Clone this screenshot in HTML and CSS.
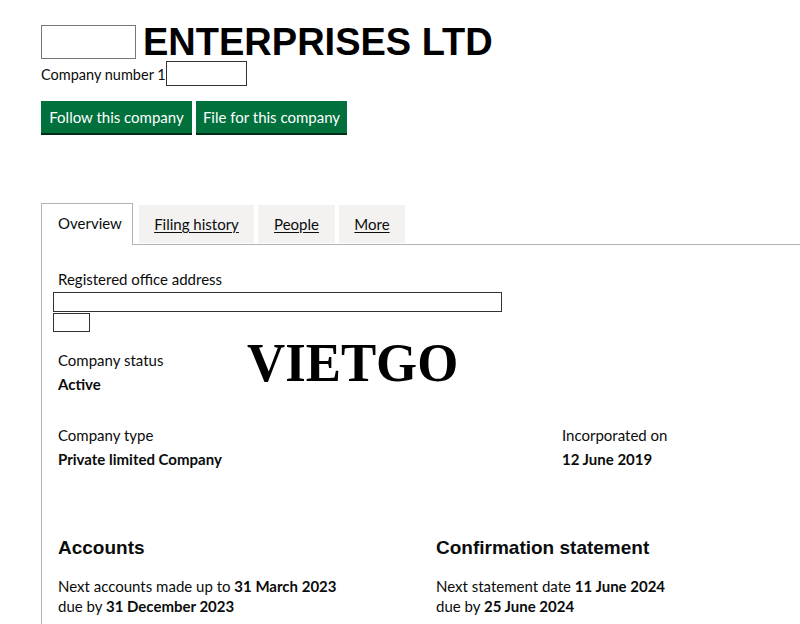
FILE: index.html
```html
<!DOCTYPE html>
<html>
<head>
    <title>ENTERPRISES LTD - Company overview</title>
    <link rel="stylesheet" href="styles.css">
</head>
<body>
    <div class="page">
        <div class="heading">
            <span class="blank blank-name"></span>
            <h1>ENTERPRISES LTD</h1>
        </div>
        <p class="company-number">Company number 1<span class="blank blank-number"></span></p>
        <div class="actions">
            <button class="button">Follow this company</button>
            <button class="button">File for this company</button>
        </div>

        <ul class="tabs">
            <li class="tab active">Overview</li>
            <li class="tab tab-filing"><a href="#">Filing history</a></li>
            <li class="tab tab-people"><a href="#">People</a></li>
            <li class="tab tab-more"><a href="#">More</a></li>
        </ul>

        <div class="panel">
            <dl class="address">
                <dt>Registered office address</dt>
                <dd><span class="blank blank-line"></span><span class="blank blank-short"></span></dd>
            </dl>

            <div class="status-row">
                <dl>
                    <dt>Company status</dt>
                    <dd class="strong">Active</dd>
                </dl>
                <div class="watermark">VIETGO</div>
            </div>

            <div class="row row-type">
                <dl>
                    <dt>Company type</dt>
                    <dd class="strong">Private limited Company</dd>
                </dl>
                <dl>
                    <dt>Incorporated on</dt>
                    <dd class="strong">12 June 2019</dd>
                </dl>
            </div>

            <div class="row row-dates">
                <div class="column">
                    <h2>Accounts</h2>
                    <p>Next accounts made up to <strong>31 March 2023</strong><br>
                    due by <strong>31 December 2023</strong></p>
                </div>
                <div class="column">
                    <h2>Confirmation statement</h2>
                    <p>Next statement date <strong>11 June 2024</strong><br>
                    due by <strong>25 June 2024</strong></p>
                </div>
            </div>
        </div>
    </div>
</body>
</html>
```

FILE: styles.css
```css
body {
    margin: 0;
    font-family: Lato, Arial, sans-serif;
    font-size: 15px;
    color: #0b0c0c;
    background: #fff;
}
.page {
    padding: 25px 0 0 41px;
}
.blank {
    display: inline-block;
    box-sizing: border-box;
    border: 1px solid #333;
    background: #fff;
}
.heading {
    display: flex;
    align-items: center;
    gap: 7px;
    height: 34px;
}
.blank-name {
    width: 95px;
    height: 34px;
    border-color: #777;
}
h1 {
    margin: 0;
    font-family: "Liberation Sans", Arial, sans-serif;
    font-size: 38px;
    font-weight: bold;
    line-height: 34px;
    color: #000;
}
.company-number {
    margin: 2px 0 0;
    height: 26px;
    font-size: 14.5px;
    display: flex;
    align-items: center;
}
.blank-number {
    width: 81px;
    height: 25px;
    margin-top: -2px;
}
.actions {
    display: flex;
    gap: 4px;
    margin-top: 14px;
}
.button {
    font-family: inherit;
    font-size: 15px;
    color: #fff;
    background: #00703c;
    border: none;
    border-radius: 0;
    box-shadow: 0 2px 0 #002d18;
    height: 32px;
    width: 151px;
    padding: 0;
    white-space: nowrap;
    cursor: pointer;
}
.tabs {
    list-style: none;
    margin: 68px 0 0;
    padding: 2px 0 0;
    display: flex;
    align-items: flex-end;
    border-bottom: 1px solid #b1b4b6;
    height: 41px;
}
.tab {
    box-sizing: border-box;
    background: #f3f2f1;
    height: 38px;
    line-height: 38px;
    text-align: center;
    margin-right: 4px;
    margin-bottom: 1px;
}
.tab-filing {
    width: 115px;
}
.tab-people {
    width: 77px;
}
.tab-more {
    width: 66px;
}
.tab a {
    color: #0b0c0c;
    text-decoration: underline;
    text-underline-offset: 2px;
}
.tab.active {
    background: #fff;
    border: 1px solid #b1b4b6;
    border-bottom: none;
    height: 42px;
    line-height: 38px;
    text-align: left;
    margin-bottom: -1px;
    padding: 0 0 0 16px;
    width: 92px;
    margin-right: 6px;
}
.panel {
    border-left: 1px solid #b1b4b6;
    padding: 25px 0 20px 16px;
    margin-top: -1px;
}
dl {
    margin: 0;
}
dt {
    line-height: 20px;
}
dd {
    margin: 0;
}
.strong, strong {
    font-weight: bold;
}
.address dd {
    margin-left: -5px;
    margin-top: 3px;
}
.blank-line {
    display: block;
    width: 449px;
    height: 20px;
}
.blank-short {
    display: block;
    width: 37px;
    height: 19px;
    margin-top: 1px;
}
.status-row {
    display: flex;
    margin-top: 8px;
}
.status-row dl {
    width: 189px;
    padding-top: 10px;
}
.status-row dd,
.row-type dd {
    margin-top: 4px;
    line-height: 20px;
}
.watermark {
    font-family: "Liberation Serif", "Times New Roman", serif;
    font-weight: bold;
    font-size: 55px;
    line-height: 55px;
    margin-top: -5px;
    color: #000;
    transform: scaleX(0.96);
    transform-origin: left center;
}
.row-type {
    display: flex;
    margin-top: 31px;
}
.row-type dl:first-child {
    width: 504px;
}
.row-dates {
    display: flex;
    margin-top: 67px;
}
.row-dates .column:first-child {
    width: 378px;
}
h2 {
    margin: 0;
    font-family: "Liberation Sans", Arial, sans-serif;
    font-size: 19px;
    font-weight: bold;
    line-height: 24px;
}
.row-dates p {
    margin: 16px 0 0;
    line-height: 20px;
}
```
